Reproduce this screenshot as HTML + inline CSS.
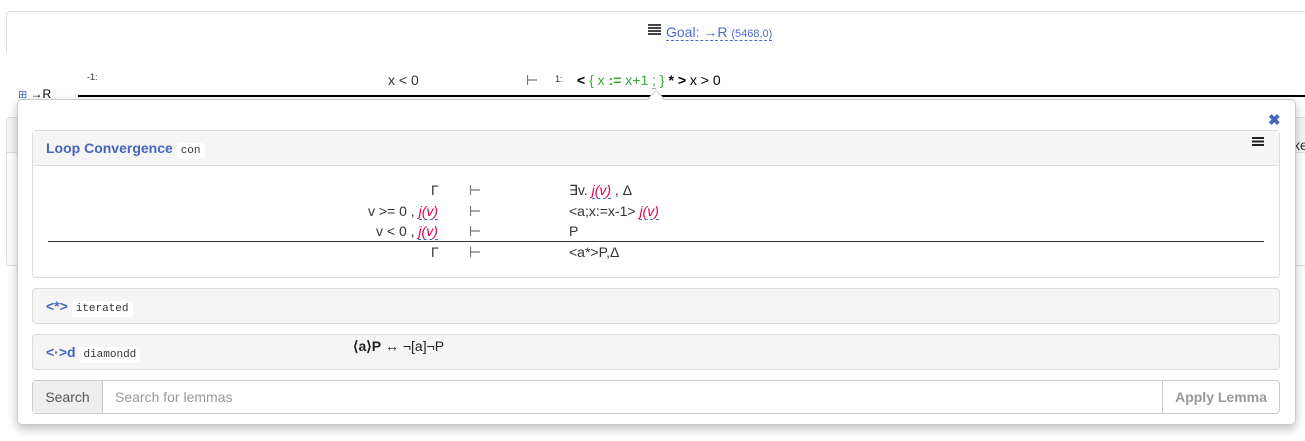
<!DOCTYPE html>
<html><head><meta charset="utf-8"><style>
body{margin:0;width:1305px;height:441px;overflow:hidden;background:#fff;font-family:"Liberation Sans",sans-serif;font-size:14px;color:#333;position:relative}
.a{position:absolute}
.lnk{color:#4a6cc7}
.code{font-family:"Liberation Mono",monospace;font-size:11px;background:#fff;color:#333;padding:2px 4px;border-radius:3px;font-weight:normal}
.panel{position:absolute;left:32px;width:1246px;border:1px solid #ddd;border-radius:4px;background:#f5f5f5}
.h{color:#4466bb;font-weight:bold;font-size:14px}
.j{color:#e0004c;font-style:italic;border-bottom:1px dashed #4a6cc7}
</style></head><body>
<div class="a" style="left:6px;top:11px;width:1300px;height:40px;border:1px solid #ddd;border-bottom:none;border-radius:4px 0 0 0"></div>
<div class="a" style="left:648px;top:24px;width:13px;height:12px;background:repeating-linear-gradient(#444 0 2px,#fff 2px 3px)"></div>
<div class="a" style="left:666px;top:24px;font-size:14px"><span class="lnk" style="border-bottom:1px dashed #4a6cc7">Goal: →R <span style="font-size:11px">(5468,0)</span></span></div>
<div class="a" style="left:87px;top:72px;font-size:9px;color:#333">-1:</div>
<div class="a" style="left:388px;top:72px">x &lt; 0</div>
<div class="a" style="left:526px;top:72px;color:#555">⊢</div>
<div class="a" style="left:555px;top:74px;font-size:9px">1:</div>
<div class="a" style="left:577px;top:72px;color:#000"><b>&lt;</b> <span style="color:#3a3">{ x <b>:=</b> x+1 <span style="border-bottom:1px dashed #aaa">;</span> }</span> <b>*</b> <b>&gt;</b> x &gt; 0</div>
<div class="a" style="left:78px;top:95px;width:1227px;height:2px;background:#000"></div>
<div class="a" style="left:18px;top:87px;font-size:12px;color:#000"><span style="color:#4a6cc7;font-size:11px">⊞</span> →R</div>
<div class="a" style="left:6px;top:117px;width:1300px;height:147px;border:1px solid #ddd;border-radius:4px"></div>
<div class="a" style="left:7px;top:118px;width:1298px;height:34px;background:#f5f5f5;border-bottom:1px solid #ddd"></div>
<div class="a" style="left:1293px;top:137px">xe</div>
<div class="a" style="left:17px;top:99px;width:1277px;height:324px;background:#fff;border:1px solid #ccc;border-radius:5px;box-shadow:0 4px 10px rgba(0,0,0,.25)"></div>
<div class="a" style="left:647px;top:90px;width:0;height:0;border-left:9px solid transparent;border-right:9px solid transparent;border-bottom:9px solid #ccc"></div>
<div class="a" style="left:648px;top:91px;width:0;height:0;border-left:8px solid transparent;border-right:8px solid transparent;border-bottom:9px solid #fff"></div>
<div class="a" style="left:1268px;top:111px;color:#4466bb;font-weight:bold;font-size:15px">✖</div>
<div class="panel" style="top:130px;height:146px;background:#fff">
<div style="height:34px;background:#f5f5f5;border-bottom:1px solid #ddd"></div>
</div>
<div class="a h" style="left:46px;top:140px">Loop Convergence <span class="code">con</span></div>
<div class="a" style="left:1252px;top:137px;width:12px;height:9px;background:repeating-linear-gradient(#222 0 2px,transparent 2px 3.5px)"></div>
<div class="a" style="left:431px;top:182px">Γ</div><div class="a" style="left:469px;top:182px;color:#555">⊢</div><div class="a" style="left:569px;top:182px">∃v. <span class="j">j(v)</span> , Δ</div>
<div class="a" style="left:368px;top:203px">v &gt;= 0 , <span class="j">j(v)</span></div><div class="a" style="left:469px;top:203px;color:#555">⊢</div><div class="a" style="left:569px;top:203px">&lt;a;x:=x-1&gt; <span class="j">j(v)</span></div>
<div class="a" style="left:376px;top:223px">v &lt; 0 , <span class="j">j(v)</span></div><div class="a" style="left:469px;top:223px;color:#555">⊢</div><div class="a" style="left:569px;top:223px">P</div>
<div class="a" style="left:48px;top:241px;width:1216px;height:1px;background:#333"></div>
<div class="a" style="left:431px;top:244px">Γ</div><div class="a" style="left:469px;top:244px;color:#555">⊢</div><div class="a" style="left:569px;top:244px">&lt;a*&gt;P,Δ</div>
<div class="panel" style="top:288px;height:34px"></div>
<div class="a h" style="left:46px;top:298px">&lt;*&gt; <span class="code">iterated</span></div>
<div class="panel" style="top:334px;height:34px"></div>
<div class="a h" style="left:46px;top:344px">&lt;·&gt;d <span class="code">diamondd</span></div>
<div class="a" style="left:353px;top:338px;color:#222"><b>⟨a⟩P</b> ↔ ¬[a]¬P</div>
<div class="a" style="left:32px;top:380px;width:1246px;height:32px;border:1px solid #ccc;border-radius:4px;background:#fff"></div>
<div class="a" style="left:33px;top:381px;width:69px;height:32px;background:#eee;border-right:1px solid #ccc;line-height:32px;text-align:center;color:#555">Search</div>
<div class="a" style="left:115px;top:389px;color:#999">Search for lemmas</div>
<div class="a" style="left:1162px;top:381px;width:116px;height:32px;border-left:1px solid #ccc;line-height:32px;text-align:center;color:#999;font-weight:bold">Apply Lemma</div>
</body></html>
